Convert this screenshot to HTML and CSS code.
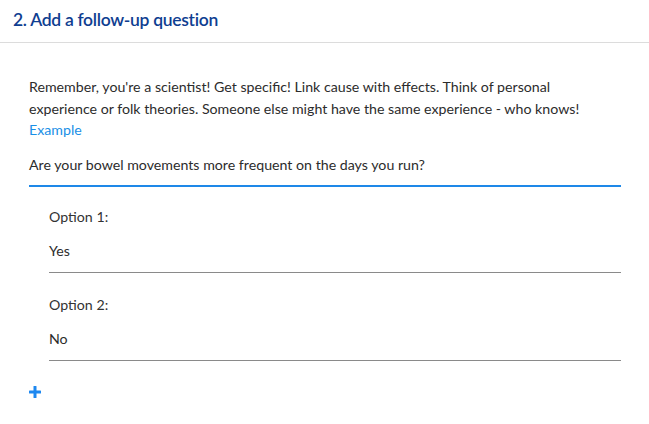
FILE: index.html
```html
<!DOCTYPE html>
<html>
<head>
<meta charset="utf-8">
<link rel="stylesheet" href="styles.css">
</head>
<body>
<div class="header">
  <h2 class="title">2. Add a follow-up question</h2>
</div>
<div class="content">
  <p class="hint">Remember, you're a scientist! Get specific! Link cause with effects. Think of personal<br>experience or folk theories. Someone else might have the same experience - who knows!<br><a class="link" href="#">Example</a></p>
  <div class="question">Are your bowel movements more frequent on the days you run?</div>
  <div class="options">
    <div class="option">
      <div class="label">Option 1:</div>
      <div class="value">Yes</div>
    </div>
    <div class="option">
      <div class="label">Option 2:</div>
      <div class="value">No</div>
    </div>
  </div>
  <button class="add" aria-label="Add option">
    <svg width="12" height="12" viewBox="0 0 12 12"><rect x="4.5" y="0" width="3" height="12" rx="0.6" fill="#1e88f0"/><rect x="0" y="4.5" width="12" height="3" rx="0.6" fill="#1e88f0"/></svg>
  </button>
</div>
</body>
</html>
```
FILE: styles.css
```css
* { box-sizing: border-box; }
html, body { margin: 0; padding: 0; background: #fff; }
body { font-family: Lato, "Open Sans", sans-serif; color: #2c2c2c; font-size: 14.2px; font-weight: 400; line-height: 21.5px; }
.header { height: 43px; border-bottom: 1px solid #dcdcdc; padding: 9px 13px 0; }
.title { margin: 0; font-size: 17.5px; font-weight: 600; color: #0f3e91; line-height: 22px; letter-spacing: -0.3px; }
.content { padding: 33px 28px 0 29px; }
.hint { margin: 0; }
.link { color: #1a8fe6; text-decoration: none; }
.question { margin-top: 13px; padding-bottom: 10px; border-bottom: 2px solid #1e88e8; }
.options { padding-left: 20px; }
.option { padding-top: 19px; }
.option + .option { padding-top: 21px; }
.label { color: #333; }
.value { margin-top: 12.5px; padding-bottom: 10.5px; border-bottom: 1px solid #8a8a8a; }
.add { display: block; margin: 25px 0 0; padding: 0; border: 0; background: none; width: 12px; height: 12px; line-height: 0; cursor: pointer; }
```
